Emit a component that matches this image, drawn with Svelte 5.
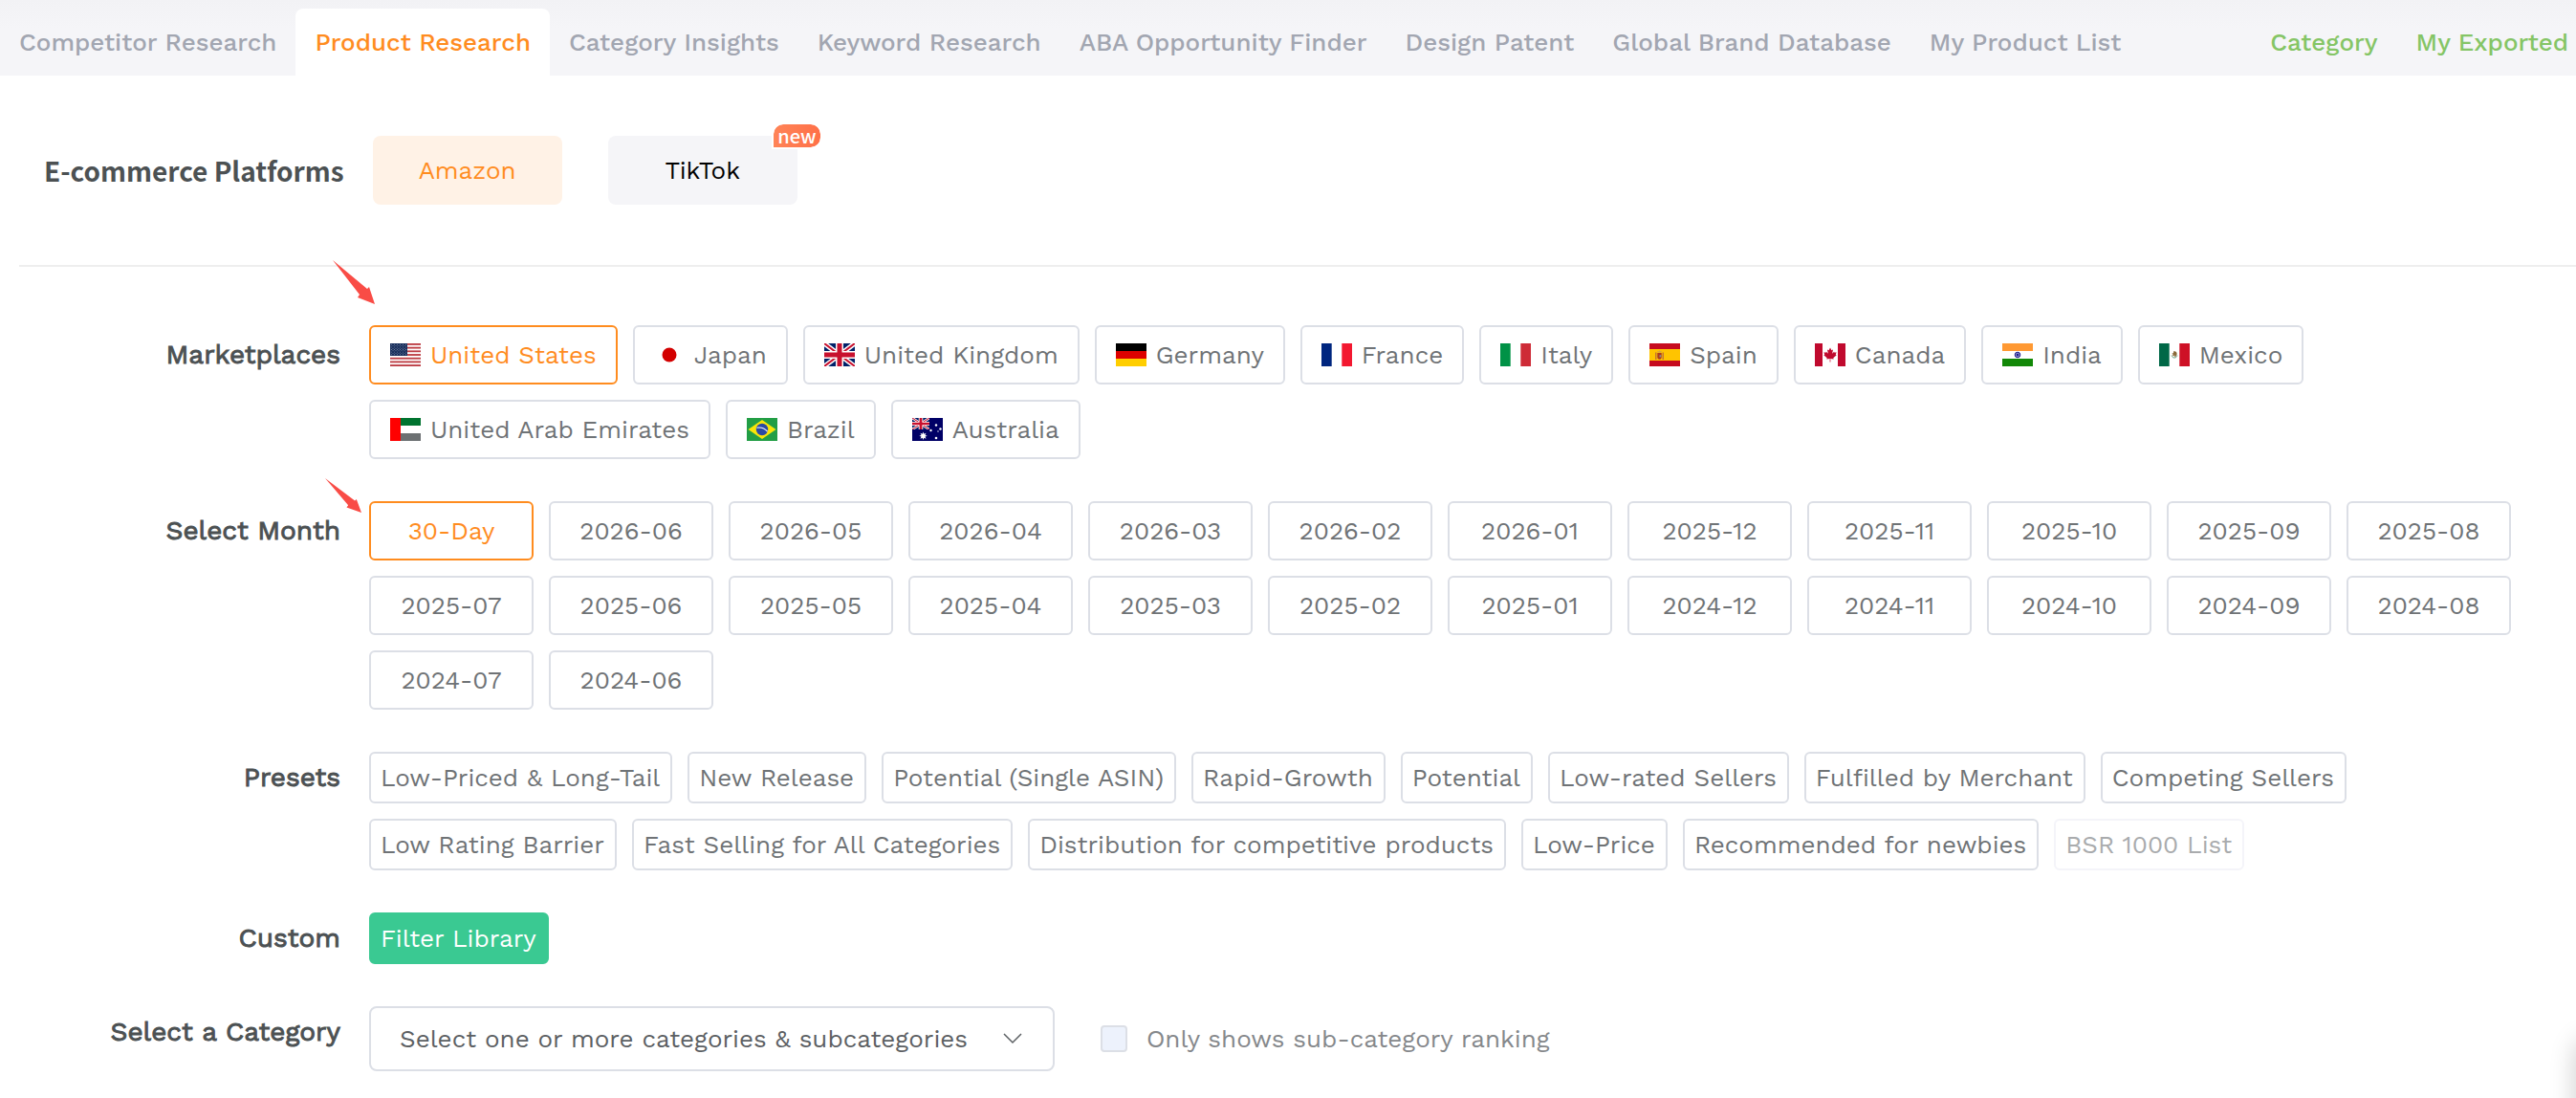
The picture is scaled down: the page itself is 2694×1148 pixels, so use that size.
<script lang="ts">
const tabs = [
  "Competitor Research",
  "Product Research",
  "Category Insights",
  "Keyword Research",
  "ABA Opportunity Finder",
  "Design Patent",
  "Global Brand Database",
  "My Product List",
];
const links = ["Category", "My Exported"];

const marketplaces = [
  { code: "us", name: "United States" },
  { code: "jp", name: "Japan" },
  { code: "gb", name: "United Kingdom" },
  { code: "de", name: "Germany" },
  { code: "fr", name: "France" },
  { code: "it", name: "Italy" },
  { code: "es", name: "Spain" },
  { code: "ca", name: "Canada" },
  { code: "in", name: "India" },
  { code: "mx", name: "Mexico" },
  { code: "ae", name: "United Arab Emirates" },
  { code: "br", name: "Brazil" },
  { code: "au", name: "Australia" },
];

// 30-Day first, then every month from 2026-06 back to 2024-06
const buildMonths = (): string[] => {
  const list = ["30-Day"];
  let year = 2026;
  let month = 6;
  while (year > 2024 || month >= 6) {
    list.push(`${year}-${String(month).padStart(2, "0")}`);
    month -= 1;
    if (month === 0) {
      month = 12;
      year -= 1;
    }
  }
  return list;
};
const months = buildMonths();

const presets = [
  "Low-Priced & Long-Tail",
  "New Release",
  "Potential (Single ASIN)",
  "Rapid-Growth",
  "Potential",
  "Low-rated Sellers",
  "Fulfilled by Merchant",
  "Competing Sellers",
  "Low Rating Barrier",
  "Fast Selling for All Categories",
  "Distribution for competitive products",
  "Low-Price",
  "Recommended for newbies",
  "BSR 1000 List",
];
const disabledPresets = ["BSR 1000 List"];

let activeTab = $state("Product Research");
let platform = $state("Amazon");
let marketplace = $state("us");
let activeMonth = $state("30-Day");
let onlySubCategory = $state(false);
</script>

{#snippet unionJack()}
  <path fill="#012169" d="M0 0h32v24H0z" />
  <path stroke="#fff" stroke-width="5" d="M0 0l32 24M32 0L0 24" />
  <path stroke="#c8102e" stroke-width="2" d="M0 0l32 24M32 0L0 24" />
  <path stroke="#fff" stroke-width="8" d="M16 0v24M0 12h32" />
  <path stroke="#c8102e" stroke-width="5" d="M16 0v24M0 12h32" />
{/snippet}

{#snippet flag(code: string)}
  <svg class="flag" viewBox="0 0 32 24" aria-hidden="true">
    {#if code === "us"}
      <path fill="#fff" d="M0 0h32v24H0z" />
      {#each [0, 2, 4, 6, 8, 10, 12] as stripe}
        <rect fill="#bd3d44" x="0" y={(stripe * 24) / 13} width="32" height={24 / 13} />
      {/each}
      <path fill="#192f5d" d="M0 0h18v13H0z" />
      {#each [1, 2, 3, 4, 5, 6, 7, 8, 9] as line}
        {#each [0, 1, 2, 3, 4, 5] as col}
          {#if line % 2 === 1 || col < 5}
            <circle fill="#fff" opacity="0.7" cx={1.5 + col * 3 + (line % 2 === 0 ? 1.5 : 0)} cy={line * 1.3} r="0.45" />
          {/if}
        {/each}
      {/each}
    {:else if code === "jp"}
      <path fill="#fff" d="M0 0h32v24H0z" />
      <circle fill="#d30000" cx="16" cy="12" r="7.5" />
    {:else if code === "gb"}
      {@render unionJack()}
    {:else if code === "de"}
      <path d="M0 0h32v8H0z" />
      <path fill="#d00" d="M0 8h32v8H0z" />
      <path fill="#ffce00" d="M0 16h32v8H0z" />
    {:else if code === "fr"}
      <path fill="#fff" d="M0 0h32v24H0z" />
      <path fill="#00267f" d="M0 0h10.7v24H0z" />
      <path fill="#f31830" d="M21.3 0H32v24H21.3z" />
    {:else if code === "it"}
      <path fill="#fff" d="M0 0h32v24H0z" />
      <path fill="#009246" d="M0 0h10.7v24H0z" />
      <path fill="#ce2b37" d="M21.3 0H32v24H21.3z" />
    {:else if code === "es"}
      <path fill="#c60b1e" d="M0 0h32v24H0z" />
      <path fill="#ffc400" d="M0 6h32v12H0z" />
      <path fill="#c8772e" d="M6 9.5h1.5V17H6zM13.5 9.5H15V17h-1.5z" />
      <path fill="#ad3a1c" d="M8.3 10h4.4v4.5a2.2 2.2 0 01-4.4 0z" />
      <path fill="#d9a441" d="M8.6 9.4L8.2 7.8l1.2.5 1.1-1 1.1 1 1.2-.5-.4 1.6z" />
      <path fill="#8b8d90" d="M10.5 12.2h1.9v2.2h-1.9z" />
    {:else if code === "ca"}
      <path fill="#fff" d="M0 0h32v24H0z" />
      <path fill="#c00a2e" d="M0 0h8v24H0zM24 0h8v24h-8z" />
      <path
        fill="#c00a2e"
        d="M16 4.6l-1.4 2.6-1.6-.8.9 4.3-2-2-.5 1-2-.4.8 2.4-.9.5 3.4 3-.4 1.3 3.4-.5-.1 3.4h.8l-.1-3.4 3.4.5-.4-1.3 3.4-3-.9-.5.8-2.4-2 .4-.5-1-2 2 .9-4.3-1.6.8z"
      />
    {:else if code === "in"}
      <path fill="#fff" d="M0 0h32v24H0z" />
      <path fill="#f93" d="M0 0h32v8H0z" />
      <path fill="#128807" d="M0 16h32v8H0z" />
      <circle fill="#8f8fc8" stroke="#1a1a8c" cx="16" cy="12" r="2.8" />
      <circle fill="#1a1a8c" cx="16" cy="12" r="1.2" />
    {:else if code === "mx"}
      <path fill="#fff" d="M0 0h32v24H0z" />
      <path fill="#006847" d="M0 0h10.7v24H0z" />
      <path fill="#ce1126" d="M21.3 0H32v24H21.3z" />
      <path fill="#8a6a3b" d="M15 8.4c2.5-.6 4 1 3.6 3.2-.2 1.6-1.3 2.6-2.6 2.9l.4-2-2.4 1 .5-2.2-1.2-.6 1.8-.6z" />
      <path fill="none" stroke="#6fa58c" d="M13 12.5c.5 3.4 5.5 3.4 6 0" />
    {:else if code === "ae"}
      <path fill="#fff" d="M0 0h32v24H0z" />
      <path fill="#00732f" d="M0 0h32v8H0z" />
      <path fill="#6c7072" d="M0 16h32v8H0z" />
      <path fill="#f00" d="M0 0h11v24H0z" />
    {:else if code === "br"}
      <path fill="#229e45" d="M0 0h32v24H0z" />
      <path fill="#f8e509" d="M16 2l14.5 10L16 22 1.5 12z" />
      <circle fill="#2b49a3" cx="16" cy="12" r="6.2" />
      <path fill="none" stroke="#fff" stroke-width="1.1" d="M10.4 10.2c4-.8 8.5.8 11.2 4" />
    {:else if code === "au"}
      <path fill="#006" d="M0 0h32v24H0z" />
      <svg x="0" y="0" width="18" height="12" viewBox="0 0 32 24" preserveAspectRatio="none">
        {@render unionJack()}
      </svg>
      <path
        fill="#fff"
        d="M11.5 14.5l.8 2.3 2.2-1-1 2.2 2.3.8-2.3.7 1 2.2-2.2-1-.8 2.3-.8-2.3-2.2 1 1-2.2-2.2-.7 2.2-.8-1-2.2 2.2 1z"
      />
      <circle fill="#fff" cx="25" cy="7.5" r="1.2" />
      <circle fill="#fff" cx="19.5" cy="13" r="1.2" />
      <circle fill="#fff" cx="29.5" cy="11.5" r="1.2" />
      <circle fill="#fff" cx="25" cy="21" r="1.3" />
      <circle fill="#fff" cx="27" cy="14" r="0.7" />
    {/if}
  </svg>
{/snippet}

<div class="page">
  <nav class="navbar">
    <div class="nav-group">
      {#each tabs as tab}
        <a href="#top" class="tab" class:active={tab === activeTab} onclick={() => (activeTab = tab)}>{tab}</a>
      {/each}
    </div>
    <div class="nav-group end">
      {#each links as link}
        <a href="#top" class="tab green">{link}</a>
      {/each}
    </div>
  </nav>

  <section class="platforms">
    <h2 class="platform-title">E-commerce Platforms</h2>
    <div class="platform-list">
      <button class="platform" class:active={platform === "Amazon"} onclick={() => (platform = "Amazon")}>Amazon</button>
      <button class="platform" class:active={platform === "TikTok"} onclick={() => (platform = "TikTok")}>
        TikTok
        <span class="badge">new</span>
      </button>
    </div>
  </section>

  <main class="filters">
    <div class="row">
      <div class="label">Marketplaces</div>
      <div class="chips">
        <svg class="pointer first" viewBox="0 0 44 46" preserveAspectRatio="none" aria-hidden="true">
          <path d="M0 0l36 30 2-2 6 18-18-7 2-3z" />
        </svg>
        {#each marketplaces as item}
          <button class="chip" class:active={item.code === marketplace} onclick={() => (marketplace = item.code)}>
            {@render flag(item.code)}
            {item.name}
          </button>
        {/each}
      </div>
    </div>

    <div class="row">
      <div class="label">Select Month</div>
      <div class="chips">
        <svg class="pointer second" viewBox="0 0 44 46" preserveAspectRatio="none" aria-hidden="true">
          <path d="M0 0l36 30 2-2 6 18-18-7 2-3z" />
        </svg>
        {#each months as month}
          <button class="chip month" class:active={month === activeMonth} onclick={() => (activeMonth = month)}>{month}</button>
        {/each}
      </div>
    </div>

    <div class="row">
      <div class="label small">Presets</div>
      <div class="chips">
        {#each presets as preset}
          <button class="chip small" disabled={disabledPresets.includes(preset)}>{preset}</button>
        {/each}
      </div>
    </div>

    <div class="row">
      <div class="label small">Custom</div>
      <div class="chips">
        <button class="chip small library">Filter Library</button>
      </div>
    </div>

    <div class="row">
      <label class="label small" for="category">Select a Category</label>
      <div class="category">
        <div class="select-wrap">
          <select id="category">
            <option>Select one or more categories & subcategories</option>
          </select>
          <svg class="chevron" viewBox="0 0 20 12" aria-hidden="true">
            <path d="M1 1l9 9 9-9" />
          </svg>
        </div>
        <label class="check">
          <input type="checkbox" bind:checked={onlySubCategory} />
          Only shows sub-category ranking
        </label>
      </div>
    </div>
  </main>

  <aside class="side-panel"></aside>
</div>

<style>
:global(body) {
  background: #fff;
}
.page {
  font-family: "Work Sans", Inter, sans-serif;
  font-size: 26px;
  line-height: 32px;
  color: #6f7376;
  overflow-x: hidden;
}
button,
select {
  font: inherit;
  color: inherit;
  cursor: pointer;
}
.navbar {
  display: flex;
  justify-content: space-between;
  height: 79px;
  padding-right: 8px;
  box-sizing: border-box;
  background: linear-gradient(#f2f2f5, #f5f5f8 30px);
}
.nav-group {
  display: flex;
  align-items: flex-end;
}
.nav-group.end {
  gap: 40px;
}
.tab {
  height: 70px;
  padding: 0 20px;
  line-height: 70px;
  font-weight: 500;
  color: #a2a6b1;
  text-decoration: none;
  white-space: nowrap;
}
.tab.active {
  color: #ff8c1f;
  background: #fff;
  border-radius: 8px 8px 0 0;
}
.tab.green {
  padding: 0;
  color: #85c566;
}
.platforms {
  display: flex;
  align-items: center;
  gap: 30px;
  margin-left: 20px;
  padding: 63px 0 63px 26px;
  border-bottom: 2px solid #eee;
}
.platform-title {
  margin: 0;
  font-family: "Noto Sans CJK SC", sans-serif;
  font-size: 28px;
  font-weight: 700;
  color: #4c5153;
}
.platform-list {
  display: flex;
  gap: 48px;
}
.platform {
  position: relative;
  width: 198px;
  height: 72px;
  padding: 0;
  border: 0;
  border-radius: 8px;
  background: #f5f5f8;
  color: #000;
}
.platform.active {
  background: #fff2e6;
  color: #ff8c1f;
}
.badge {
  position: absolute;
  top: -14px;
  right: -26px;
  padding: 0 4px;
  border: 2px solid #fff;
  border-radius: 12px 12px 12px 0;
  background: linear-gradient(90deg, #ff8457, #ff7048) padding-box;
  color: #fff;
  font-family: "Noto Sans CJK SC", sans-serif;
  font-size: 20px;
  font-weight: 500;
  line-height: 24px;
}
.filters {
  display: flex;
  flex-direction: column;
  gap: 44px;
  padding: 61px 40px 28px 0;
}
.row {
  display: flex;
  gap: 30px;
}
.label {
  flex: 0 0 356px;
  font-size: 28px;
  font-weight: 400;
  -webkit-text-stroke: 1px #4c5153;
  line-height: 62px;
  text-align: right;
  color: #4c5153;
}
.label.small {
  line-height: 54px;
}
.chips {
  position: relative;
  display: flex;
  flex-wrap: wrap;
  gap: 16px;
}
.chip {
  display: flex;
  align-items: center;
  justify-content: center;
  gap: 10px;
  height: 62px;
  padding: 0 20px;
  box-sizing: border-box;
  border: 2px solid #dcdfe6;
  border-radius: 6px;
  background: #fff;
  white-space: nowrap;
}
.chip.active {
  border-color: #ff8c1f;
  color: #ff8c1f;
}
.chip.month {
  width: 172px;
}
.chip.small {
  height: 54px;
  padding: 0 11px 0 10px;
}
.chip:disabled {
  border-color: #f4f4f9;
  color: #a9abad;
  cursor: not-allowed;
}
.chip.library {
  border-color: #3ac992;
  background: #3ac992;
  color: #fff;
}
.flag {
  width: 32px;
  height: 24px;
}
.pointer {
  position: absolute;
  fill: #f94c46;
}
.pointer.first {
  left: -38px;
  top: -68px;
  width: 44px;
  height: 46px;
}
.pointer.second {
  left: -46px;
  top: -24px;
  width: 38px;
  height: 36px;
}
.category {
  display: flex;
  align-items: center;
  gap: 48px;
}
.select-wrap {
  display: grid;
  align-items: center;
}
select {
  grid-area: 1 / 1;
  height: 68px;
  padding: 0 88px 0 30px;
  border: 2px solid #dcdfe6;
  border-radius: 8px;
  background: #fff;
  color: #5c6063;
  appearance: none;
}
.chevron {
  grid-area: 1 / 1;
  justify-self: end;
  width: 20px;
  height: 12px;
  margin-right: 34px;
  fill: none;
  stroke: #5c6063;
  stroke-width: 1.5;
  pointer-events: none;
}
.check {
  display: flex;
  align-items: center;
  gap: 20px;
  color: #85888b;
}
.check input {
  width: 28px;
  height: 28px;
  margin: 0;
  border: 2px solid #dcdfe6;
  border-radius: 4px;
  background: #edf2fc;
  appearance: none;
}
.check input:checked {
  background: #ff8c1f;
}
/* collapsed panel, only its shadow reaches into the page */
.side-panel {
  position: fixed;
  right: -80px;
  bottom: -120px;
  width: 80px;
  height: 180px;
  border-radius: 12px;
  box-shadow: 0 0 28px rgba(0, 0, 0, 0.2);
}
</style>
